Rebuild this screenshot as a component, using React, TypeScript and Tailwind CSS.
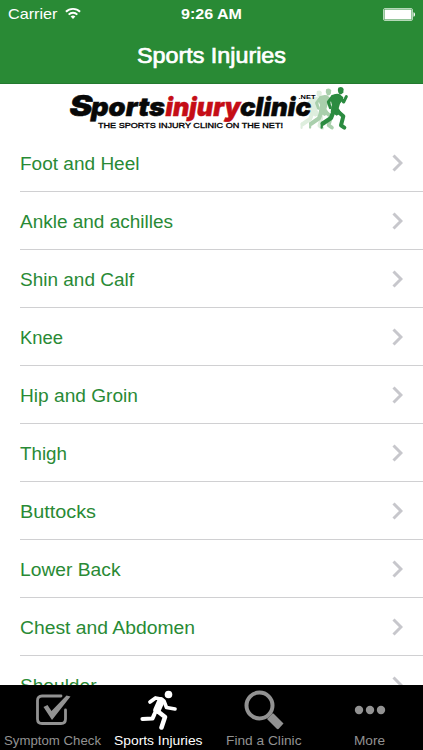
import React from 'react';

const injuries = [
  { name: 'Foot and Heel', width: 119.5 },
  { name: 'Ankle and achilles', width: 153 },
  { name: 'Shin and Calf', width: 114 },
  { name: 'Knee', width: 43 },
  { name: 'Hip and Groin', width: 118 },
  { name: 'Thigh', width: 47 },
  { name: 'Buttocks', width: 76 },
  { name: 'Lower Back', width: 100.5 },
  { name: 'Chest and Abdomen', width: 175 },
  { name: 'Shoulder', width: 76.5 },
];

const StatusBar = () => (
  <div className="flex h-7 items-center px-2 text-[14.5px] leading-7">
    <div className="flex flex-1 items-center gap-[7px]">
      <svg width="50" height="28">
        <text x="0" y="19" fill="white" fontSize="14.5" textLength="49.5" lengthAdjust="spacingAndGlyphs">Carrier</text>
      </svg>
      <svg className="mb-0.5" width="16" height="13" viewBox="0 0 17 13" fill="none" stroke="white" strokeWidth="2.1">
        <path d="M1 4.7a10.6 10.6 0 0 1 15 0" />
        <path d="M3.9 7.7a6.5 6.5 0 0 1 9.2 0" />
        <path d="M8.5 12.3 6 9.8a3.5 3.5 0 0 1 5 0z" fill="white" stroke="none" />
      </svg>
    </div>
    <svg width="61" height="28">
      <text x="0" y="19" fill="white" fontSize="14.5" fontWeight="700" textLength="61" lengthAdjust="spacingAndGlyphs">9:26 AM</text>
    </svg>
    <div className="flex flex-1 justify-end">
      <svg className="-mr-px" width="33" height="13" viewBox="0 0 33 13">
        <rect x="0.5" y="0.5" width="29" height="12" rx="1.5" fill="none" stroke="#b5d8b8" />
        <rect x="1.5" y="1.5" width="27" height="10" rx="0.5" fill="white" />
        <path d="M30.5 4.2c2 .5 2 4.1 0 4.6z" fill="white" />
      </svg>
    </div>
  </div>
);

// drawn at three times its final size
const Sprinter = () => (
  <g transform="scale(0.3333)" fill="currentColor" stroke="currentColor" strokeLinecap="round" strokeLinejoin="round">
    <path d="M55 2Q67-3 71 6L70 16Q65 25 58 21Q51 12 55 2Z" stroke="none" />
    <path d="M33 26Q46 18 58 21L70 31 66 42 60 50 56 64 64 77 50 86 32 74 36 50 31 38Z" stroke="none" />
    <path d="M38 28 25 45 31 62" fill="none" strokeWidth="9" />
    <path d="M60 30 71 45 79 29" fill="none" strokeWidth="9" />
    <path d="M52 72 70 88 63 115 73 122" fill="none" strokeWidth="12" />
    <path d="M41 72 33 93 8 110" fill="none" strokeWidth="13" />
    <path d="M6 108 5 122" fill="none" strokeWidth="7" />
  </g>
);

const Logo = () => (
  <svg className="ml-[60px] block" width="295" height="50" viewBox="0 0 295 50">
    <g transform="translate(240 6.5) scale(0.92)" className="text-[#deeede]"><Sprinter /></g>
    <g transform="translate(248.5 4.5) scale(0.96)" className="text-[#a9cfac]"><Sprinter /></g>
    <g transform="translate(260 3)" className="text-[#2b8b40]"><Sprinter /></g>
    <g fontFamily="Inter, DejaVu Sans, sans-serif" fontWeight="900" fontStyle="italic" fontSize="26" strokeWidth="0.5">
      <text x="9.5" y="31.5" fontSize="28" textLength="23" lengthAdjust="spacingAndGlyphs" fill="#080808" stroke="#080808">S</text>
      <text x="31" y="31.5" textLength="74" lengthAdjust="spacingAndGlyphs" fill="#080808" stroke="#080808">ports</text>
      <text x="105.5" y="31.5" textLength="75" lengthAdjust="spacingAndGlyphs" fill="#c50d16" stroke="#c50d16">injury</text>
      <text x="180" y="31.5" textLength="71" lengthAdjust="spacingAndGlyphs" fill="#080808" stroke="#080808">clinic</text>
    </g>
    <text x="238.5" y="14.5" fontFamily="Liberation Sans, sans-serif" fontWeight="700" fontSize="6" textLength="17" lengthAdjust="spacingAndGlyphs">.NET</text>
    <text x="38" y="43.5" fontFamily="Liberation Sans, sans-serif" fontSize="8" stroke="black" strokeWidth="0.35" textLength="185" lengthAdjust="spacingAndGlyphs">THE SPORTS INJURY CLINIC ON THE NET!</text>
  </svg>
);

const CheckIcon = () => (
  <svg width="36" height="34" viewBox="0 0 36 34">
    <path d="M26 3H7Q2.5 3 2.5 7.5V26Q2.5 30.5 7 30.5H26Q30.5 30.5 30.5 26V17" fill="none" stroke="currentColor" strokeWidth="2.8" strokeLinecap="round" />
    <path d="M8.5 14 12.5 12 16.5 18 31.5 2.5 35.5 3.5 17 27z" fill="currentColor" />
  </svg>
);

const RunIcon = () => (
  <svg width="38" height="40" viewBox="0 0 38 40" fill="none" stroke="currentColor" strokeLinecap="round" strokeLinejoin="round">
    <circle cx="29.5" cy="4.5" r="3.8" fill="currentColor" stroke="none" />
    <path d="M11 12 16.5 8 22 9" strokeWidth="3.8" />
    <path d="M22 11 18 20" strokeWidth="7.5" />
    <path d="M25 11 27.5 17.5 36 19" strokeWidth="3.6" />
    <path d="M19 21.5 26 27 22.5 37.5" strokeWidth="4.5" />
    <path d="M15.5 24 13.5 28.5 3.5 29" strokeWidth="4.2" />
  </svg>
);

const SearchIcon = () => (
  <svg width="40" height="40" viewBox="0 0 40 40">
    <circle cx="15.5" cy="15.5" r="13" fill="none" stroke="currentColor" strokeWidth="4" />
    <path d="M23.5 28.5 28.5 23.5Q29 23 30 24L39.5 33.5 34.5 39Q33.5 39.5 32.5 38.5L23.5 29.5Z" fill="currentColor" />
  </svg>
);

const MoreIcon = () => (
  <svg width="32" height="10" viewBox="0 0 32 10" fill="currentColor">
    <circle cx="5" cy="5" r="4.2" />
    <circle cx="16" cy="5" r="4.2" />
    <circle cx="27" cy="5" r="4.2" />
  </svg>
);

const tabs = [
  { label: 'Symptom Check', width: 97, icon: <CheckIcon /> },
  { label: 'Sports Injuries', width: 88.5, icon: <RunIcon />, active: true },
  { label: 'Find a Clinic', width: 75.5, icon: <SearchIcon /> },
  { label: 'More', width: 31, icon: <MoreIcon /> },
];

const App = () => {
  return (
    <div className="flex h-[750px] w-[423px] flex-col overflow-hidden bg-white font-['Liberation_Sans',Arial,sans-serif]">
      <header className="h-[84px] shrink-0 border-b border-[#237a30] bg-[#298a35] text-white">
        <StatusBar />
        <h1 className="flex h-[55px] justify-center">
          <svg width="150" height="55">
            <text x="0" y="35" fill="white" stroke="white" strokeWidth="0.7" fontSize="22" textLength="149" lengthAdjust="spacingAndGlyphs">Sports Injuries</text>
          </svg>
        </h1>
      </header>

      <main className="min-h-0 flex-1 overflow-hidden">
        <Logo />
        <ul className="pl-5">
          {injuries.map(injury => (
            <li key={injury.name} className="flex h-[58px] items-center justify-between border-b border-[#d0d0d2] pr-5">
              <svg className="overflow-visible" width={injury.width} height="28">
                <text x="0" y="20.5" fill="#298a35" fontSize="18.7" textLength={injury.width} lengthAdjust="spacingAndGlyphs">{injury.name}</text>
              </svg>
              <svg width="11" height="18" viewBox="0 0 11 18" fill="none" stroke="#c7c7cc" strokeWidth="3">
                <path d="m1.5 1.5 7.5 7.5-7.5 7.5" />
              </svg>
            </li>
          ))}
        </ul>
      </main>

      <nav className="grid h-[65px] shrink-0 grid-cols-[105px_106px_105px_107px] bg-black">
        {tabs.map(tab => (
          <div key={tab.label} className={`flex flex-col items-center ${tab.active ? 'text-white' : 'text-[#929292]'}`}>
            <div className="flex h-[49px] items-center">{tab.icon}</div>
            <svg className="overflow-visible" width={tab.width} height="16">
              <text x="0" y="11" fill="currentColor" fontSize="12.7" textLength={tab.width} lengthAdjust="spacingAndGlyphs">{tab.label}</text>
            </svg>
          </div>
        ))}
      </nav>
    </div>
  );
};

export default App;
